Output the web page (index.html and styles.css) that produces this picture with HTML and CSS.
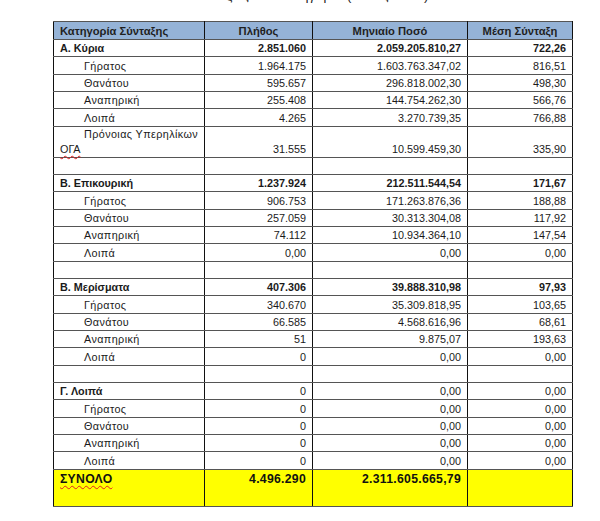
FILE: index.html
```html
<!DOCTYPE html>
<html lang="el">
<head>
<meta charset="utf-8">
<link rel="stylesheet" href="styles.css">
</head>
<body>
<div class="title-clip"><div class="title">Συντάξεις ανά κατηγορία (Μάιος 2012)</div></div>
<table class="sheet">
  <colgroup>
    <col class="c1"><col class="c2"><col class="c3"><col class="c4">
  </colgroup>
  <thead>
    <tr class="head">
      <th class="lbl">Κατηγορία Σύνταξης</th>
      <th>Πλήθος</th>
      <th>Μηνιαίο Ποσό</th>
      <th>Μέση Σύνταξη</th>
    </tr>
  </thead>
  <tbody>
    <tr class="grp"><td class="lbl">Α. Κύρια</td><td>2.851.060</td><td>2.059.205.810,27</td><td>722,26</td></tr>
    <tr><td class="lbl sub">Γήρατος</td><td>1.964.175</td><td>1.603.763.347,02</td><td>816,51</td></tr>
    <tr><td class="lbl sub">Θανάτου</td><td>595.657</td><td>296.818.002,30</td><td>498,30</td></tr>
    <tr><td class="lbl sub">Αναπηρική</td><td>255.408</td><td>144.754.262,30</td><td>566,76</td></tr>
    <tr><td class="lbl sub">Λοιπά</td><td>4.265</td><td>3.270.739,35</td><td>766,88</td></tr>
    <tr class="tall"><td class="lbl"><span class="wrap1">Πρόνοιας Υπερηλίκων</span><br><span class="spell">ΟΓΑ</span></td><td>31.555</td><td>10.599.459,30</td><td>335,90</td></tr>
    <tr class="empty"><td></td><td></td><td></td><td></td></tr>
    <tr class="grp"><td class="lbl">Β. Επικουρική</td><td>1.237.924</td><td>212.511.544,54</td><td>171,67</td></tr>
    <tr><td class="lbl sub">Γήρατος</td><td>906.753</td><td>171.263.876,36</td><td>188,88</td></tr>
    <tr><td class="lbl sub">Θανάτου</td><td>257.059</td><td>30.313.304,08</td><td>117,92</td></tr>
    <tr><td class="lbl sub">Αναπηρική</td><td>74.112</td><td>10.934.364,10</td><td>147,54</td></tr>
    <tr><td class="lbl sub">Λοιπά</td><td>0,00</td><td>0,00</td><td>0,00</td></tr>
    <tr class="empty"><td></td><td></td><td></td><td></td></tr>
    <tr class="grp"><td class="lbl">Β. Μερίσματα</td><td>407.306</td><td>39.888.310,98</td><td>97,93</td></tr>
    <tr><td class="lbl sub">Γήρατος</td><td>340.670</td><td>35.309.818,95</td><td>103,65</td></tr>
    <tr><td class="lbl sub">Θανάτου</td><td>66.585</td><td>4.568.616,96</td><td>68,61</td></tr>
    <tr><td class="lbl sub">Αναπηρική</td><td>51</td><td>9.875,07</td><td>193,63</td></tr>
    <tr><td class="lbl sub">Λοιπά</td><td>0</td><td>0,00</td><td>0,00</td></tr>
    <tr class="empty"><td></td><td></td><td></td><td></td></tr>
    <tr class="grp plain"><td class="lbl">Γ. Λοιπά</td><td>0</td><td>0,00</td><td>0,00</td></tr>
    <tr><td class="lbl sub">Γήρατος</td><td>0</td><td>0,00</td><td>0,00</td></tr>
    <tr><td class="lbl sub">Θανάτου</td><td>0</td><td>0,00</td><td>0,00</td></tr>
    <tr><td class="lbl sub">Αναπηρική</td><td>0</td><td>0,00</td><td>0,00</td></tr>
    <tr><td class="lbl sub">Λοιπά</td><td>0</td><td>0,00</td><td>0,00</td></tr>
    <tr class="total"><td class="lbl"><span class="spell">ΣΥΝΟΛΟ</span></td><td>4.496.290</td><td>2.311.605.665,79</td><td></td></tr>
  </tbody>
</table>
</body>
</html>
```

FILE: styles.css
```css
html, body {
  margin: 0;
  padding: 0;
  background: #ffffff;
}

body {
  font-family: "Liberation Sans", Arial, sans-serif;
  font-size: 10.8px;
  color: #1a1a1a;
}

.title-clip {
  height: 4px;
  overflow: hidden;
  margin-left: 190px;
}

.title {
  font-size: 13px;
  line-height: 15px;
  margin-top: -12px;
  letter-spacing: 0.5px;
  white-space: nowrap;
  color: #222;
}

.sheet {
  margin: 17px 0 0 53px;
  border-collapse: collapse;
  table-layout: fixed;
  width: 519px;
  border: 1.5px solid #444;
}

.c1 { width: 151px; }
.c2 { width: 108px; }
.c3 { width: 155px; }
.c4 { width: 105px; }

.sheet tr {
  height: 17.33px;
}

.sheet th,
.sheet td {
  border-left: 1px solid #111;
  border-right: 1px solid #111;
  border-top: 1px solid #555;
  border-bottom: 1px solid #555;
  padding: 0 6px 1px 6px;
  line-height: 13px;
  vertical-align: bottom;
  text-align: right;
  white-space: nowrap;
  overflow: visible;
}

.sheet tr.head {
  height: 18px;
}

.head th {
  background: #95b3d7;
  font-weight: bold;
  text-align: center;
  font-size: 11.2px;
  color: #1f1f1f;
}

.sheet .lbl {
  text-align: left;
}

.sheet .sub {
  padding-left: 30px;
  letter-spacing: 0.4px;
}

.grp td {
  font-weight: bold;
}

.grp.plain td {
  font-weight: normal;
}

.grp.plain td.lbl {
  font-weight: bold;
}

.sheet tr.tall {
  height: 31.2px;
}

.wrap1 {
  display: inline-block;
  padding-left: 24px;
  letter-spacing: 0.4px;
  margin-bottom: 2px;
}

.spell {
  text-decoration: underline wavy #e02020;
  text-decoration-thickness: 1px;
  text-underline-offset: 2px;
}

.sheet tr.total {
  height: 37.4px;
}

.total td {
  background: #ffff00;
  font-weight: bold;
  font-size: 12.2px;
  vertical-align: top;
  padding-top: 3px;
  padding-bottom: 0;
  letter-spacing: 0.3px;
  color: #111;
}
```
